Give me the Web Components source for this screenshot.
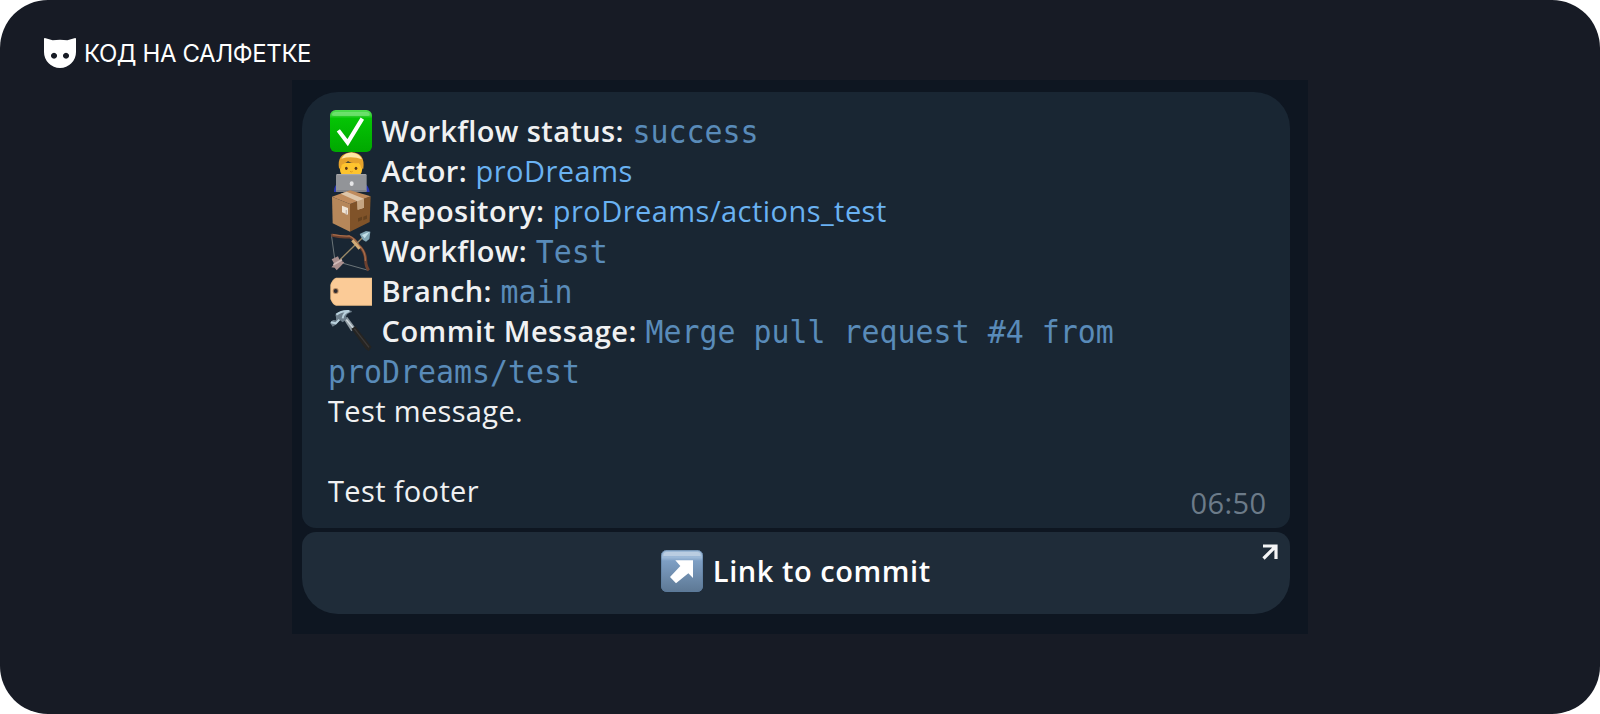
<!DOCTYPE html>
<html lang="ru">
<head>
<meta charset="utf-8">
<title>Код на салфетке</title>
<style>
html,body{margin:0;background:#fff}
body{font-family:"Open Sans","Noto Sans",sans-serif}
</style>
</head>
<body>
<post-cover>
  <brand-logo slot="brand">КОД НА САЛФЕТКЕ</brand-logo>
  <chat-shot>
    <chat-bubble time="06:50">
      <info-row icon="check" label="Workflow status:"><code-text>success</code-text></info-row>
      <info-row icon="person" label="Actor:"><link-text>proDreams</link-text></info-row>
      <info-row icon="box" label="Repository:"><link-text>proDreams/actions_test</link-text></info-row>
      <info-row icon="bow" label="Workflow:"><code-text>Test</code-text></info-row>
      <info-row icon="tag" label="Branch:"><code-text>main</code-text></info-row>
      <info-row icon="hammer" label="Commit Message:" style="--label-track:.52px"><code-text>Merge pull request #4 from</code-text></info-row>
      <info-row><code-text>proDreams/test</code-text></info-row>
      <info-row>Test message.</info-row>
      <info-row></info-row>
      <info-row>Test footer</info-row>
    </chat-bubble>
    <inline-button>Link to commit</inline-button>
  </chat-shot>
</post-cover>
<script>
const define = (name, html, setup) => customElements.define(name, class extends HTMLElement {
  connectedCallback() {
    if (this.shadowRoot) return;
    this.attachShadow({mode: 'open'}).innerHTML = html;
    if (setup) setup(this, this.shadowRoot);
  }
});

const icons = {
  check: ['30 30 126 126', `<defs><linearGradient id="g" x2="0" y2="1"><stop stop-color="#4fdd4f"/><stop offset=".12" stop-color="#3fd23f"/><stop offset=".2" stop-color="#05c405"/><stop offset="1" stop-color="#00a800"/></linearGradient></defs>
    <rect x="30" y="30" width="126" height="126" rx="17" fill="url(#g)"/><path d="M36 45Q36 36 47 36H139Q149 36 149 45Q149 48 143 48H43Q36 48 36 45" fill="#8ce98c" opacity=".55"/>
    <path d="M55 91L83 128L127 56" fill="none" stroke="#fff" stroke-width="12"/>`],
  person: ['30 150 126 126', `<path d="M42 276Q42 256 54 250H132Q146 256 149 276Z" fill="#2937b5"/>
    <path d="M60 188Q56 222 72 230H114Q130 222 127 188Z" fill="#ffc42d"/>
    <path d="M57 205Q50 160 94 157Q136 158 130 206L124 205Q123 194 116 189Q96 192 84 184Q74 192 65 194L63 206Z" fill="#e6a32c"/>
    <path d="M64 176Q76 156 98 158Q118 160 126 178Q96 167 64 176" fill="#ffe6a6"/>
    <ellipse cx="79" cy="205" rx="4" ry="5" fill="#5b3517"/><ellipse cx="108" cy="205" rx="4" ry="5" fill="#5b3517"/>
    <path d="M90 214Q94 218 98 214" fill="none" stroke="#dc971c" stroke-width="3"/>
    <rect x="48" y="222" width="92" height="54" rx="4" fill="#929498"/><path d="M51 224H137" stroke="#aaa" stroke-width="3"/><rect x="49" y="270" width="90" height="6" fill="#808288"/><ellipse cx="95" cy="251" rx="6" ry="7" fill="#e6e6e8"/>`],
  box: ['30 270 126 126', `<path d="M36 290L90 312V395L38 370Z" fill="#b6875a"/><path d="M90 312L152 289L149 366L90 395Z" fill="#805329"/>
    <path d="M36 290L90 271L152 289L90 312Z" fill="#bf8b5d"/><path d="M62 281L80 275L132 296V323L113 329L112 304Z" fill="#dec6aa"/><path d="M112 304L132 296V323L113 329Z" fill="#c5a582"/>
    <path d="M66 317L84 324V344L66 337Z" fill="#f0e5d7"/><path d="M79 330V344" stroke="#c9bab0" stroke-width="4"/>
    <path d="M114 355L126 350V360L114 365ZM130 350L141 346V356L130 361Z" fill="#65421f"/>`],
  bow: ['30 15 126 126', `<path d="M34 28L45 108L145 136" fill="none" stroke="#6b7478" stroke-width="3"/>
    <path d="M34 30Q67 38 87 35Q104 41 115 61Q136 78 137 105Q137 124 146 136" fill="none" stroke="#6d412f" stroke-width="9"/>
    <path d="M38 29Q67 34 88 33Q105 40 117 61Q137 79 136 108" fill="none" stroke="#a66c4a" stroke-width="4"/>
    <path d="M54 110L129 37" stroke="#9b8a68" stroke-width="4"/>
    <path d="M97 46L119 71" stroke="#d2ac77" stroke-width="9"/>
    <path d="M119 27L138 18L151 20L148 42L138 50L128 44Z" fill="#83a7b5"/><path d="M126 30L149 20L134 40Z" fill="#c4e0e8"/>
    <path d="M35 103L54 94L59 106L73 112L62 124L50 136L44 128L34 127L43 117Z" fill="#a98f8e"/><path d="M40 119L66 104" stroke="#d2bcba" stroke-width="5"/>`],
  tag: ['30 135 126 126', `<path d="M48 158H156V242H48Q39 241 31 222V180Q36 163 48 158Z" fill="#f3c38b"/><path d="M49 161H153V239H49Q41 236 34 221V181Q39 166 49 161Z" fill="#fbcb97"/><circle cx="47" cy="198" r="9" fill="#b78a60"/><circle cx="47" cy="198" r="6" fill="#2e2b31"/>`],
  hammer: ['30 255 126 126', `<path d="M71 283L82 276L106 308L94 319Z" fill="#919da5"/><path d="M75 279L101 311" stroke="#d2dce1" stroke-width="4"/>
    <path d="M94 311L106 304L155 366L146 378L137 372Z" fill="#252422"/><path d="M103 311L147 367" stroke="#3c3938" stroke-width="4"/>
    <path d="M30 293L39 285L48 286Q49 276 46 269Q62 254 94 257L96 261Q80 265 78 275L82 281L68 292L60 286L49 298L38 305Z" fill="#6d7e8b"/>
    <path d="M49 269Q65 257 88 258Q69 264 68 280M33 292L47 295L58 284" fill="none" stroke="#b8d0dc" stroke-width="6"/>`],
  arrow: ['0 0 126 126', `<defs><linearGradient id="a" x2="0" y2="1"><stop stop-color="#9db9d6"/><stop offset=".18" stop-color="#9bb8d7"/><stop offset=".26" stop-color="#7e9fc4"/><stop offset="1" stop-color="#5d7894"/></linearGradient></defs>
    <rect width="126" height="126" rx="17" fill="url(#a)"/><rect x="1" y="1" width="124" height="124" rx="16" fill="none" stroke="#5b7c9f" stroke-width="2"/><path d="M7 16Q7 6 17 6H109Q119 6 119 16V18H7Z" fill="#c7d6e6" opacity=".7"/>
    <path d="M43 31H96V84L82 70L45 100L27 81L58 48Z" fill="#fff"/>`]
};

define('emoji-icon', `<style>:host{display:block;width:42px;height:42px;flex:none}svg{display:block;width:42px;height:42px}</style>`, (el, root) => {
  const [box, art] = icons[el.getAttribute('name')];
  root.innerHTML += `<svg viewBox="${box}" aria-hidden="true">${art}</svg>`;
});

define('post-cover', `<style>
  :host{display:flex;flex-direction:column;box-sizing:border-box;width:1600px;height:714px;border-radius:48px;background:#171b25;padding:32px 0 0;align-items:center}
  header{height:48px;width:100%;display:flex;box-sizing:border-box;padding-left:44px}
</style><header><slot name="brand"></slot></header><slot></slot>`);

define('brand-logo', `<style>
  :host{display:flex;align-items:center;height:42px;gap:8px;font:400 24px/42px Inter,sans-serif;letter-spacing:-.4px;color:#fff;white-space:nowrap}
  svg{width:32px;height:30px;flex:none}
  span{position:relative;top:1px}
</style><svg viewBox="0 0 96 90" aria-hidden="true"><path fill="#fff" fill-rule="evenodd" d="M0 3Q0-1 5 1L26 7Q48 3 70 7L91 1Q96-1 96 3V42A48 48 0 0 1 0 42ZM30 44a9 9 0 1 0 .1 0ZM66 44a9 9 0 1 0 .1 0Z"/></svg><span><slot></slot></span>`);

define('chat-shot', `<style>
  :host{display:flex;flex-direction:column;gap:4px;box-sizing:border-box;width:1016px;height:554px;background:#0e1621;padding:12px 18px 20px 10px}
</style><slot></slot>`);

define('chat-bubble', `<style>
  :host{display:block;position:relative;box-sizing:border-box;height:436px;padding:19px 26px 0;background:#192633;border-radius:36px 36px 14px 14px;color:#f0f1f2}
  time{position:absolute;right:23.5px;bottom:5px;font-size:29px;line-height:40px;letter-spacing:.4px;color:#6c7b89}
</style><slot></slot><time></time>`, (el, root) => root.querySelector('time').textContent = el.getAttribute('time'));

define('info-row', `<style>
  :host{display:flex;align-items:center;height:40px;font-size:29px;letter-spacing:.35px;line-height:40px;white-space:nowrap}
  emoji-icon{margin:0 9.5px 0 2px}
  b{font-weight:600;letter-spacing:var(--label-track,.4px);margin-right:8.5px}
  p{margin:0;height:40px}
</style>`, (el, root) => {
  const icon = el.getAttribute('icon'), label = el.getAttribute('label');
  root.innerHTML += (icon ? `<emoji-icon name="${icon}"></emoji-icon>` : '') + `<p>${label ? `<b>${label}</b>` : ''}<slot></slot></p>`;
});

define('code-text', `<style>
  :host{display:inline-block;font:29.9px/1 "DejaVu Sans Mono",monospace;letter-spacing:.01px;line-height:0;color:#598bb9;transform:scaleY(1.08);transform-origin:0 50%;white-space:pre}
</style><slot></slot>`);
define('link-text', `<style>:host{display:inline;letter-spacing:.46px;color:#6ab2f2}</style><slot></slot>`);

define('inline-button', `<style>
  :host{display:flex;position:relative;align-items:center;justify-content:center;gap:9.5px;height:82px;box-sizing:border-box;padding-bottom:4px;background:#1f2c39;border-radius:14px 14px 36px 36px;color:#fff;font-size:29px;letter-spacing:.55px;line-height:40px;font-weight:600}
  .out{position:absolute;right:12px;top:12px;width:16px;height:16px}
</style><emoji-icon name="arrow"></emoji-icon><span><slot></slot></span>
<svg class="out" viewBox="0 0 16 16" aria-hidden="true"><path d="M1 2H14V15M14 2L1.5 14.5" fill="none" stroke="#f4f5f6" stroke-width="3.2"/></svg>`);
</script>
</body>
</html>
